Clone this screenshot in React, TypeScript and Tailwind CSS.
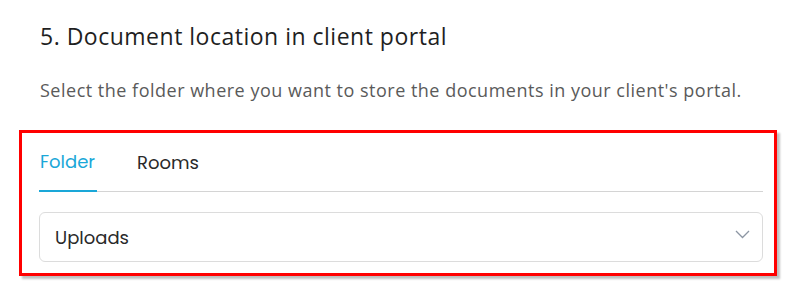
import React from "react";

export default function App() {
  return (
    <div className="w-[812px] h-[289px] bg-white font-['Open_Sans',sans-serif] pt-[20px]">
      <h2 className="ml-[40px] text-[23px] leading-[32px] tracking-[0.5px] text-[#1f1f1f]">
        5. Document location in client portal
      </h2>
      <p className="ml-[40px] mt-[25px] text-[18px] leading-[26px] tracking-[0.5px] text-[#5a5a5a]">
        Select the folder where you want to store the documents in your client's portal.
      </p>

      {/* Highlighted panel */}
      <div className="ml-[19px] mt-[27px] w-[758px] h-[146px] border-[3px] border-[#ff0000] shadow-[3px_3px_2px_rgba(0,0,0,0.25)] pl-[17px] pr-[11px] pt-[16px]">
        <div className="flex border-b border-[#d4d4d4] font-['Poppins','Open_Sans',sans-serif]">
          <button className="px-[1px] pb-[15px] text-[18px] leading-[26px] text-[#1aa7d8] border-b-2 border-[#1aa7d8] -mb-px w-[58px] text-left">
            Folder
          </button>
          <button className="ml-[40px] pb-[15px] text-[18px] leading-[26px] text-[#2a2a2a]">
            Rooms
          </button>
        </div>
        <div className="mt-[20px] h-[50px] rounded-[6px] border border-[#dcdcdc] flex items-center justify-between pl-[15px] pr-[12px]">
          <span className="font-['Poppins','Open_Sans',sans-serif] text-[18px] text-[#2a2a2a]">Uploads</span>
          <svg width="15" height="9" viewBox="0 0 15 9" className="mb-[5px]" fill="none">
            <polyline points="1,1 7.5,7.5 14,1" stroke="#8c96a3" strokeWidth="1.3" />
          </svg>
        </div>
      </div>
    </div>
  );
}
